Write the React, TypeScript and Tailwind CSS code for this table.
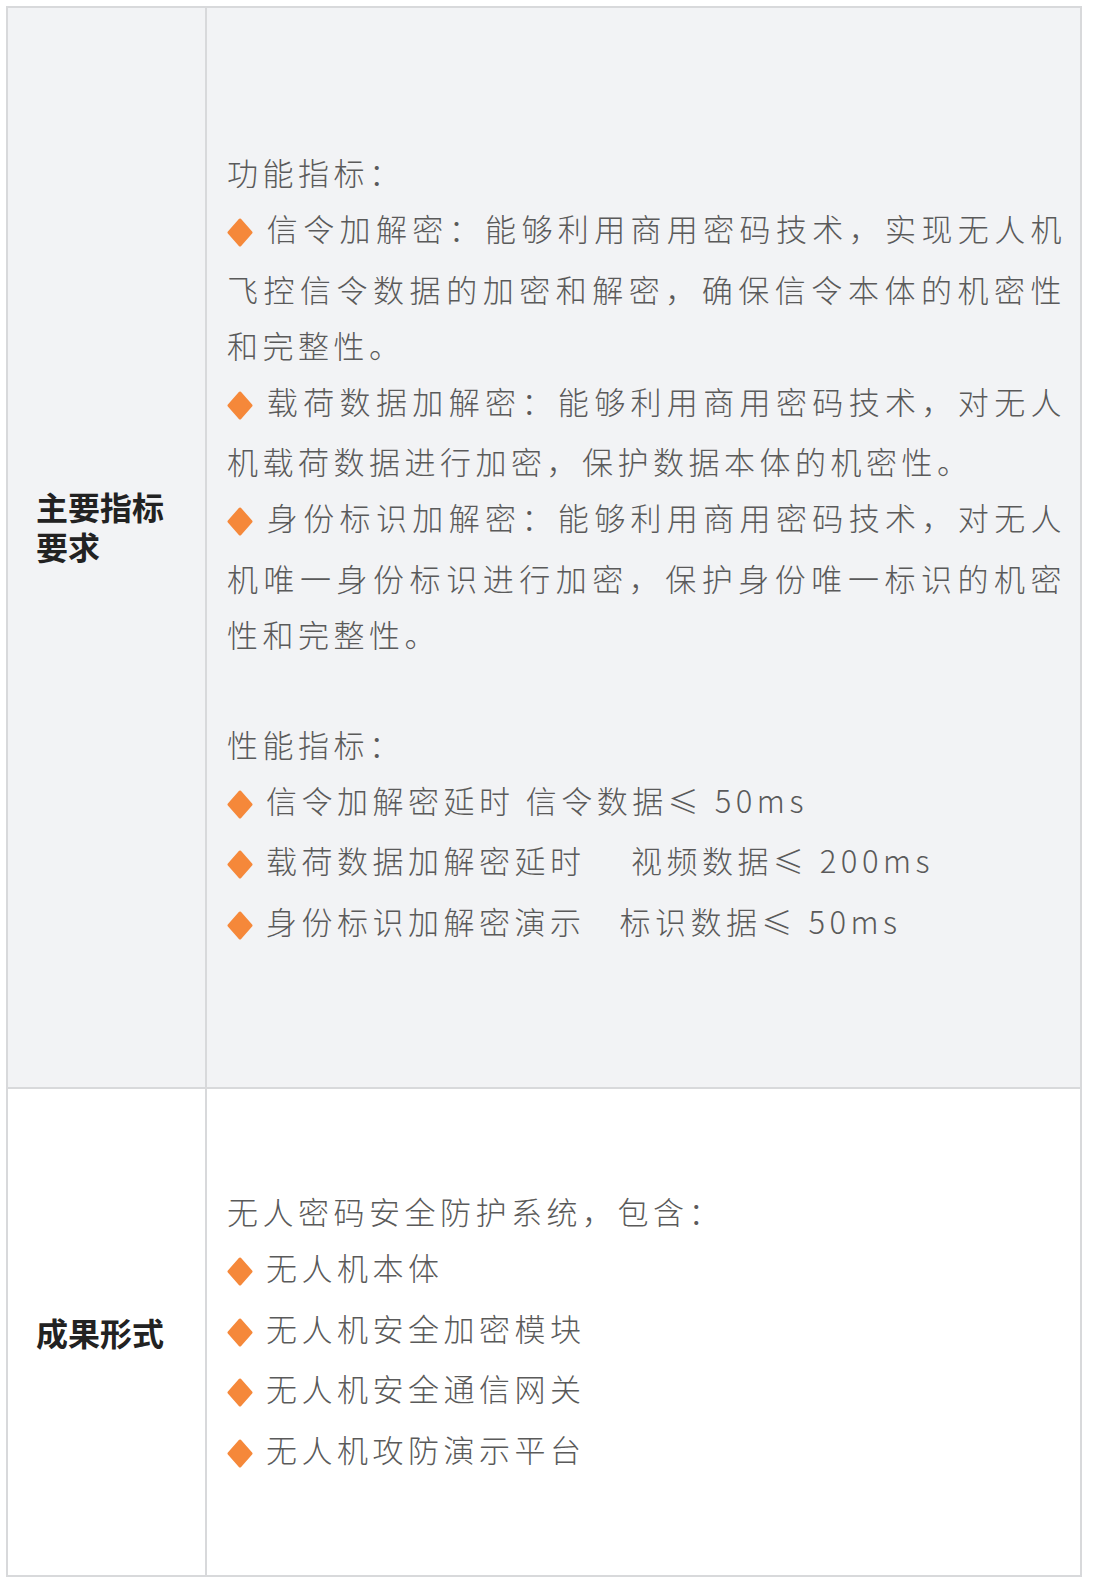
import React from "react";

type Line = {
  text: string;
  bullet?: boolean;
  justify?: boolean;
};

const specLines: Line[] = [
  { text: "信令加解密：能够利用商用密码技术，实现无人机", bullet: true, justify: true },
  { text: "飞控信令数据的加密和解密，确保信令本体的机密性", justify: true },
  { text: "和完整性。" },
  { text: "载荷数据加解密：能够利用商用密码技术，对无人", bullet: true, justify: true },
  { text: "机载荷数据进行加密，保护数据本体的机密性。" },
  { text: "身份标识加解密：能够利用商用密码技术，对无人", bullet: true, justify: true },
  { text: "机唯一身份标识进行加密，保护身份唯一标识的机密", justify: true },
  { text: "性和完整性。" },
];

const perfLines: Line[] = [
  { text: "信令加解密延时 信令数据≤ 50ms", bullet: true },
  { text: "载荷数据加解密延时    视频数据≤ 200ms", bullet: true },
  { text: "身份标识加解密演示   标识数据≤ 50ms", bullet: true },
];

const outputLines: Line[] = [
  { text: "无人机本体", bullet: true },
  { text: "无人机安全加密模块", bullet: true },
  { text: "无人机安全通信网关", bullet: true },
  { text: "无人机攻防演示平台", bullet: true },
];

function Diamond() {
  return (
    <svg
      width="26"
      height="29"
      viewBox="0 0 26 29"
      className="mr-[13px] inline-block align-[-6px]"
      aria-hidden="true"
    >
      <polygon
        points="13,2 24,14.5 13,27 2,14.5"
        fill="#f5883a"
        stroke="#f5883a"
        strokeWidth="3"
        strokeLinejoin="round"
      />
    </svg>
  );
}

function TextLine({ text, bullet, justify }: Line) {
  return (
    <div
      className={`h-[56px] whitespace-pre leading-[56px] ${bullet ? "mb-[4.5px]" : ""} ${
        justify ? "[text-align-last:justify] text-justify" : ""
      }`}
    >
      {bullet && <Diamond />}
      {text}
    </div>
  );
}

export default function App() {
  return (
    <div className="min-h-screen bg-white pl-[6px] pt-[6px] font-['Noto_Sans_CJK_SC',sans-serif]">
      <div className="w-[1076px] border-2 border-[#d8d9db]">
        {/* 主要指标要求 */}
        <div className="flex border-b-2 border-[#d8d9db] bg-[#f2f3f5]">
          <div className="flex w-[199px] shrink-0 items-center border-r-2 border-[#d8d9db] px-[28px] pb-[44px]">
            <h3 className="text-[32px] font-bold leading-[40px] text-[#222]">
              主要指标要求
            </h3>
          </div>

          <div className="min-w-0 flex-1 pb-[134px] pl-[20px] pr-[14px] pt-[136px] text-[31px] font-light tracking-[4.5px] text-[#5a5a5a]">
            <TextLine text="功能指标：" />
            {specLines.map((line) => (
              <TextLine key={line.text} {...line} />
            ))}

            <div className="h-[54px]" />

            <TextLine text="性能指标：" />
            {perfLines.map((line) => (
              <TextLine key={line.text} {...line} />
            ))}
          </div>
        </div>

        {/* 成果形式 */}
        <div className="flex bg-white">
          <div className="flex w-[199px] shrink-0 items-center border-r-2 border-[#d8d9db] px-[28px]">
            <h3 className="text-[32px] font-bold leading-[40px] text-[#222]">
              成果形式
            </h3>
          </div>

          <div className="min-w-0 flex-1 pb-[94px] pl-[20px] pr-[14px] pt-[94px] text-[31px] font-light tracking-[4.5px] text-[#5a5a5a]">
            <TextLine text="无人密码安全防护系统，包含：" />
            {outputLines.map((line) => (
              <TextLine key={line.text} {...line} />
            ))}
          </div>
        </div>
      </div>
    </div>
  );
}
